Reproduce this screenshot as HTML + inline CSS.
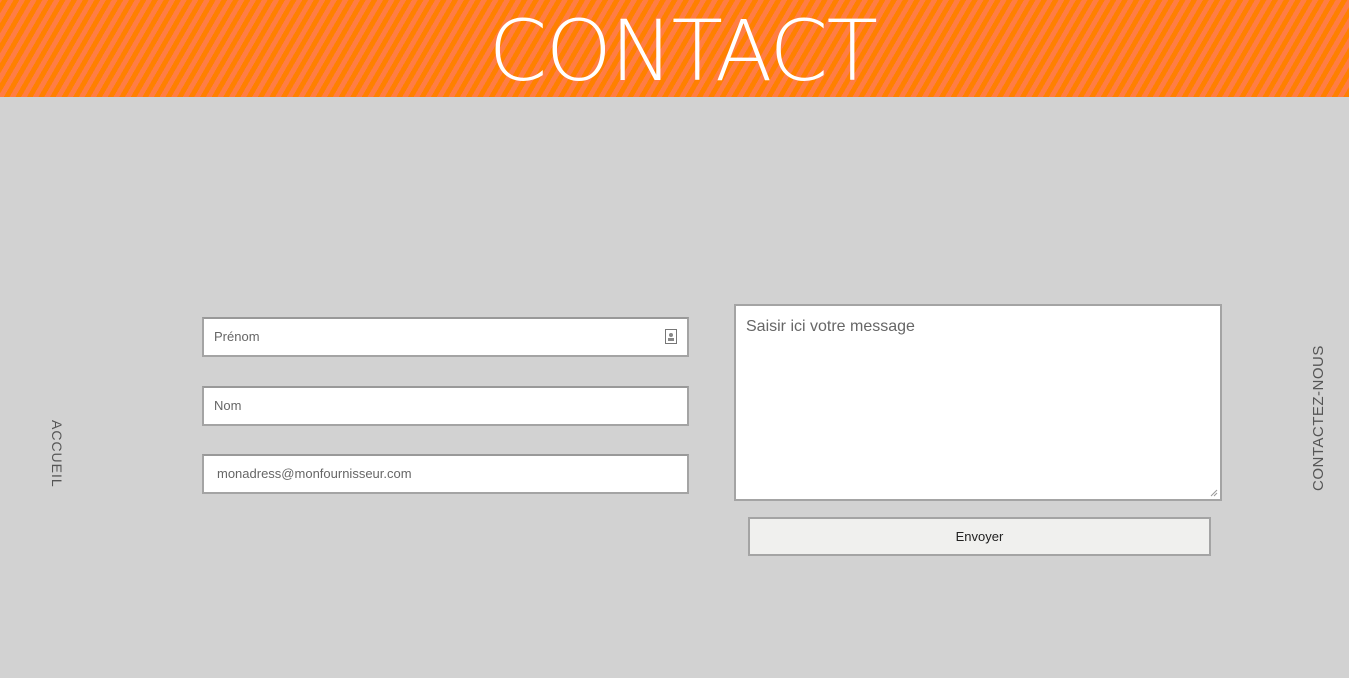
<!DOCTYPE html>
<html><head><meta charset="utf-8"><style>
html,body{margin:0;padding:0;}
body{width:1349px;height:678px;background:#d2d2d2;position:relative;overflow:hidden;font-family:"Liberation Sans",sans-serif;}
.hdr{position:absolute;left:0;top:0;width:1349px;height:97px;
background:repeating-linear-gradient(-60deg,#ff8000 0px,#ff8000 5px,#ff7d45 5px,#ff7d45 10px);}
.hdr h1{margin:0;position:absolute;left:8px;width:1349px;top:4px;text-align:center;color:#fff;font-family:"DejaVu Sans ExtraLight","DejaVu Sans",sans-serif;font-weight:200;font-size:84px;line-height:95px;letter-spacing:-1.5px;}
.in{position:absolute;left:202px;width:483px;height:36px;background:#fff;border:2px solid #a4a4a4;border-top-color:#999;box-sizing:content-box;}
.in span{position:absolute;left:10px;top:10px;font-size:13px;color:#666;}
.ta{position:absolute;left:734px;top:304px;width:484px;height:193px;background:#fff;border:2px solid #a4a4a4;}
.ta span{position:absolute;left:10px;top:12px;font-size:16px;color:#666;}
.btn{position:absolute;left:748px;top:517px;width:459px;height:35px;background:#f0f0ee;border:2px solid #a4a4a4;text-align:center;line-height:35px;font-size:13px;color:#222;}
.v{position:absolute;font-size:14px;color:#555;white-space:nowrap;}
</style></head><body>
<div class="hdr"><h1>CONTACT</h1></div>
<div class="in" style="top:317px;width:483px"><span>Prénom</span>
<svg style="position:absolute;right:10px;top:10px" width="12" height="15" viewBox="0 0 12 15"><rect x="0.5" y="0.5" width="11" height="14" fill="none" stroke="#777"/><circle cx="6" cy="6" r="2" fill="#888"/><rect x="3" y="9" width="6" height="3" fill="#888"/></svg></div>
<div class="in" style="top:386px"><span>Nom</span></div>
<div class="in" style="top:454px"><span style="left:13px">monadress@monfournisseur.com</span></div>
<div class="ta"><span>Saisir ici votre message</span>
<svg style="position:absolute;right:2px;bottom:2px" width="8" height="8"><path d="M7 1L1 7M7 4L4 7" stroke="#999"/></svg></div>
<div class="btn">Envoyer</div>
<div class="v" style="left:57px;top:420px;transform-origin:0 0;transform:rotate(90deg) translate(0,-8px);letter-spacing:1px">ACCUEIL</div>
<div class="v" style="left:1310px;top:491px;transform-origin:0 0;transform:rotate(-90deg);letter-spacing:0.5px;font-size:15px">CONTACTEZ-NOUS</div>
</body></html>
